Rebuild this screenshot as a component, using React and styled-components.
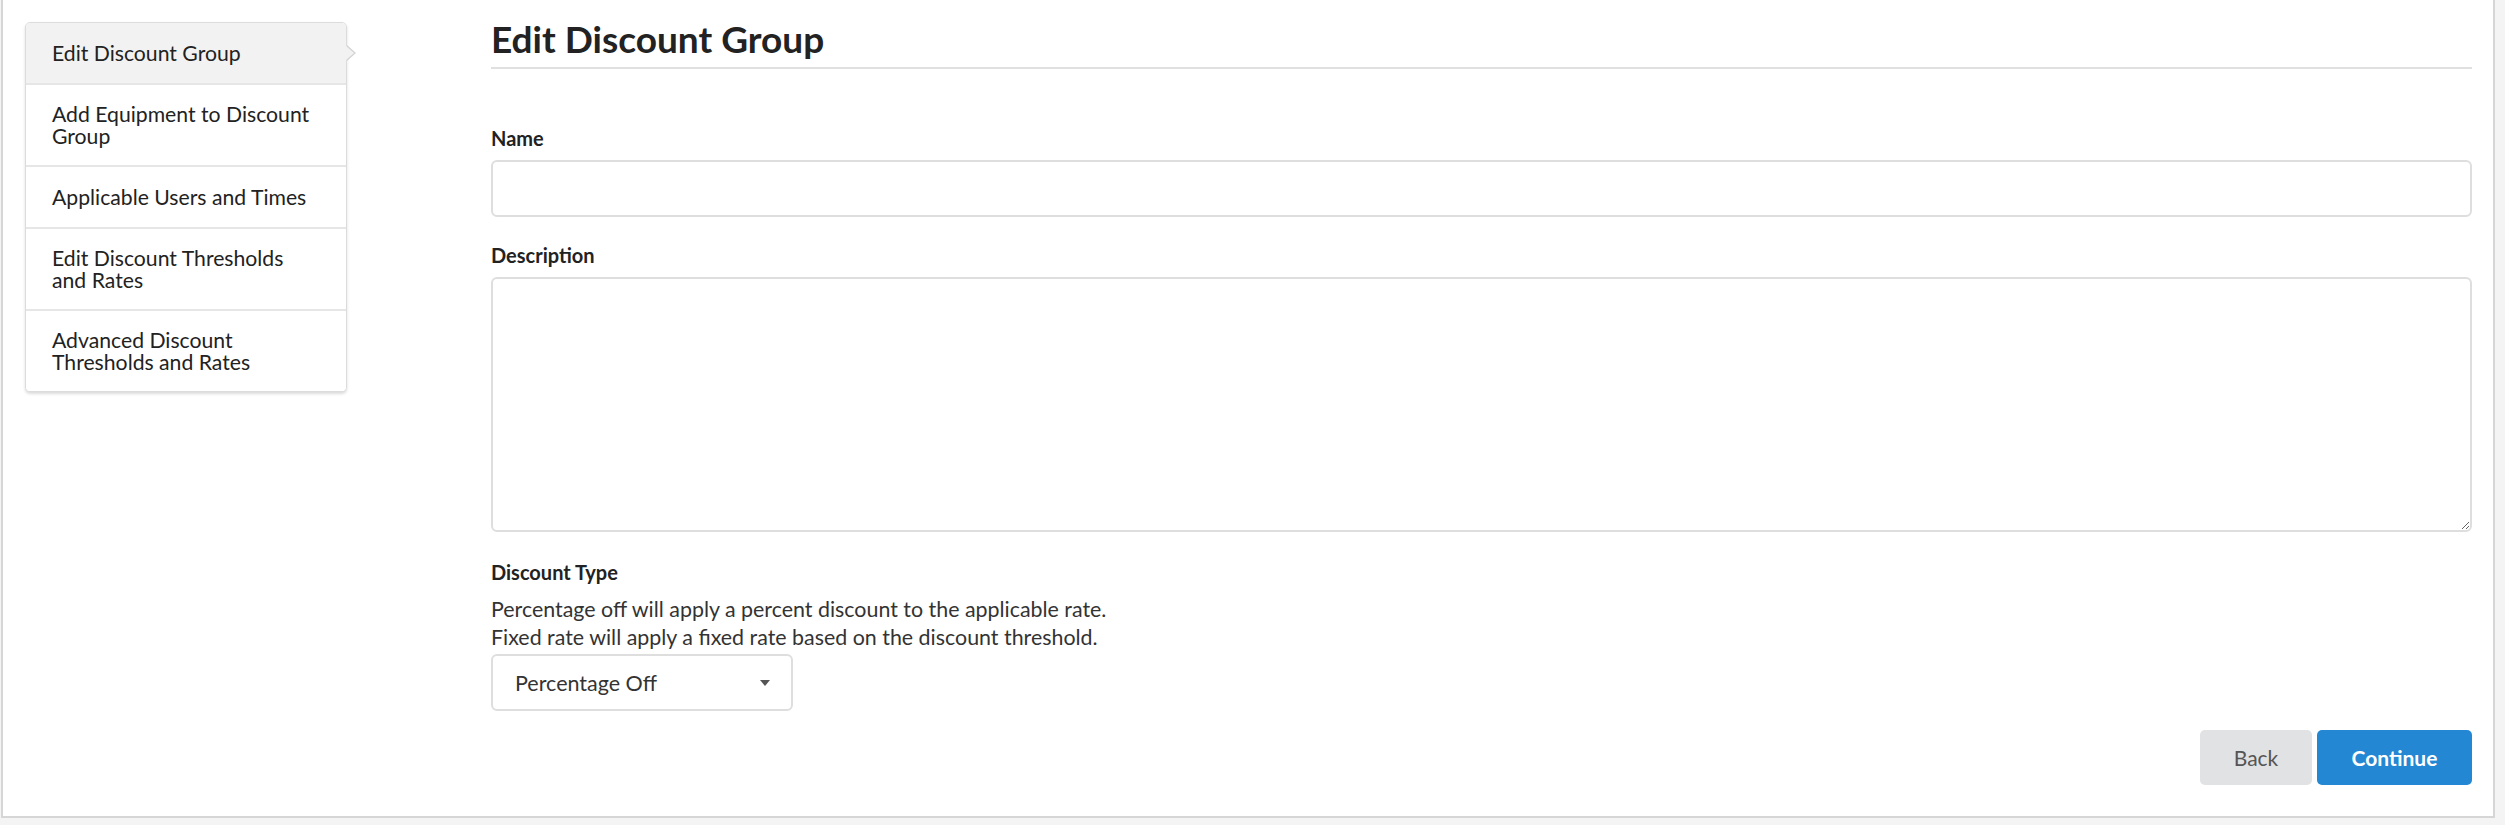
import styled, { createGlobalStyle } from "styled-components";

const GlobalStyle = createGlobalStyle`
  * { box-sizing: border-box; }
  body {
    margin: 0;
    background: #f4f4f4;
    font-family: Lato, "Open Sans", sans-serif;
    color: #222;
  }
`;

const Frame = styled.div`
  margin-left: 1px;
  width: 2494px;
  background: #fff;
  border: 2px solid #d6d6d6;
  border-top: none;
  display: flex;
  align-items: flex-start;
  padding: 0 21px 31px 22px;
`;

const SideMenu = styled.nav`
  margin-top: 22px;
  width: 322px;
  flex-shrink: 0;
  border: 1px solid #dcdcdc;
  border-radius: 5px;
  background: #fff;
  box-shadow: 0 2px 3px rgba(0, 0, 0, 0.14);
`;

const SideItem = styled.div`
  position: relative;
  display: flex;
  align-items: center;
  min-height: 62px;
  padding: 18px 26px;
  font-size: 21.2px;
  line-height: 22px;
  color: #222;
  background: ${(p) => (p.$active ? "#f2f2f2" : "#fff")};
  border-bottom: 2px solid #e6e6e6;
  cursor: pointer;

  &:first-child {
    border-radius: 4px 4px 0 0;
  }
  &:last-child {
    border-bottom: none;
    border-radius: 0 0 4px 4px;
  }

  ${(p) =>
    p.$active &&
    `
    &::before, &::after {
      content: "";
      position: absolute;
      top: 50%;
      border-style: solid;
      border-color: transparent;
      border-right-width: 0;
    }
    &::before {
      right: -10px;
      margin-top: -8px;
      border-width: 8px 0 8px 9px;
      border-left-color: #d4d4d4;
    }
    &::after {
      right: -8px;
      margin-top: -7px;
      border-width: 7px 0 7px 8px;
      border-left-color: #f2f2f2;
    }
  `}
`;

const Main = styled.main`
  flex: 1;
  margin-left: 144px;
`;

const Title = styled.h1`
  margin: 0;
  padding: 19px 0 8px;
  font-size: 37px;
  line-height: 40px;
  font-weight: 700;
  color: #222;
  border-bottom: 2px solid #e0e0e0;
`;

const Field = styled.div`
  margin-top: ${(p) => p.$top || 25}px;
`;

const Label = styled.label`
  display: block;
  font-size: 20px;
  line-height: 24px;
  font-weight: 700;
  color: #222;
  margin-bottom: 10px;
`;

const TextInput = styled.input`
  display: block;
  width: 100%;
  height: 57px;
  border: 2px solid #dedede;
  border-radius: 6px;
  padding: 0 20px;
  font: inherit;
  font-size: 21px;
  outline: none;
`;

const TextArea = styled.textarea`
  display: block;
  width: 100%;
  height: 255px;
  border: 2px solid #dedede;
  border-radius: 6px;
  padding: 14px 20px;
  font: inherit;
  font-size: 21px;
  outline: none;
`;

const Help = styled.p`
  margin: 11px 0 0;
  font-size: 21.4px;
  line-height: 28px;
  color: #333;
`;

const SelectWrap = styled.div`
  position: relative;
  width: 302px;
  margin-top: 3px;
`;

const Select = styled.select`
  display: block;
  width: 100%;
  height: 57px;
  appearance: none;
  border: 2px solid #dedede;
  border-radius: 6px;
  background: #fff;
  padding: 0 22px;
  font: inherit;
  font-size: 21.5px;
  color: #333;
  outline: none;
`;

const Caret = styled.svg`
  position: absolute;
  right: 23px;
  top: 50%;
  margin-top: -3px;
  pointer-events: none;
`;

const Actions = styled.div`
  display: flex;
  justify-content: flex-end;
  gap: 5px;
  margin-top: 19px;
`;

const Button = styled.button`
  height: 55px;
  width: ${(p) => (p.$primary ? 155 : 112)}px;
  border: none;
  border-radius: 5px;
  font-family: inherit;
  font-size: 21px;
  font-weight: ${(p) => (p.$primary ? 700 : 400)};
  color: ${(p) => (p.$primary ? "#fff" : "#555")};
  background: ${(p) => (p.$primary ? "#2387d3" : "#e1e2e4")};
  cursor: pointer;
`;

const steps = [
  "Edit Discount Group",
  "Add Equipment to Discount Group",
  "Applicable Users and Times",
  "Edit Discount Thresholds and Rates",
  "Advanced Discount Thresholds and Rates",
];

export default function App() {
  return (
    <>
      <GlobalStyle />
      <Frame>
        <SideMenu>
          {steps.map((s, i) => (
            <SideItem key={s} $active={i === 0}>
              {s}
            </SideItem>
          ))}
        </SideMenu>

        <Main>
          <Title>Edit Discount Group</Title>

          <Field $top={57}>
            <Label htmlFor="name">Name</Label>
            <TextInput id="name" type="text" />
          </Field>

          <Field $top={26}>
            <Label htmlFor="description">Description</Label>
            <TextArea id="description" />
          </Field>

          <Field $top={28}>
            <Label htmlFor="discountType">Discount Type</Label>
            <Help>
              Percentage off will apply a percent discount to the applicable rate.
              <br />
              Fixed rate will apply a fixed rate based on the discount threshold.
            </Help>
            <SelectWrap>
              <Select id="discountType" defaultValue="percentage">
                <option value="percentage">Percentage Off</option>
                <option value="fixed">Fixed Rate</option>
              </Select>
              <Caret width="10" height="6" viewBox="0 0 10 6">
                <path d="M0 0h10L5 6z" fill="#555" />
              </Caret>
            </SelectWrap>
          </Field>

          <Actions>
            <Button type="button">Back</Button>
            <Button type="button" $primary>
              Continue
            </Button>
          </Actions>
        </Main>
      </Frame>
    </>
  );
}
